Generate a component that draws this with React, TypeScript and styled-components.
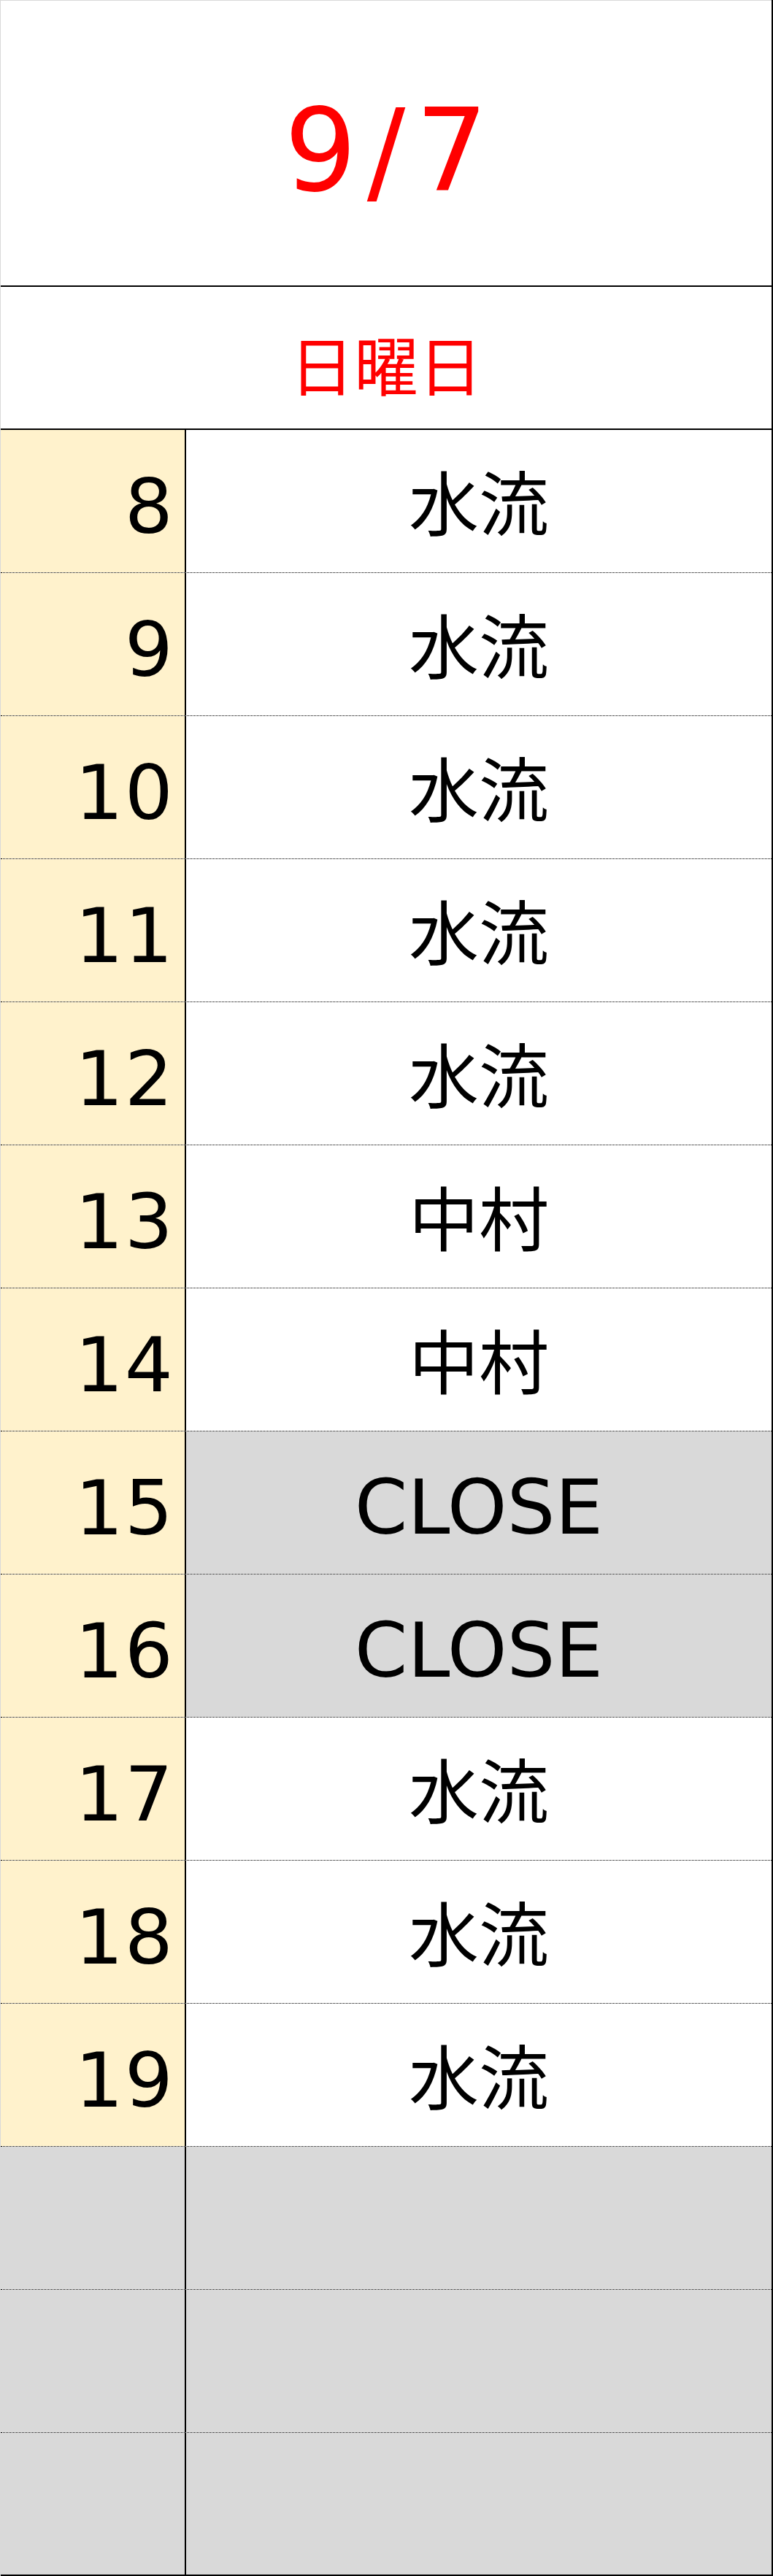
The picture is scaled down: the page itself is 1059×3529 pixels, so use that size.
import styled, { createGlobalStyle } from "styled-components";

const Global = createGlobalStyle`
    html, body {
        margin: 0;
        padding: 0;
        background: #ffffff;
    }
    body {
        font-family: "DejaVu Sans", "Noto Sans CJK JP", sans-serif;
        color: #000000;
    }
`;

const Sheet = styled.div`
    box-sizing: border-box;
    width: 1059px;
    border-left: 1px solid #d9d9d9;
    border-right: 2px solid #000000;
    display: flex;
    flex-direction: column;
`;

const Title = styled.div`
    box-sizing: border-box;
    height: 393px;
    border-top: 1px solid #d9d9d9;
    border-bottom: 2px solid #000000;
    display: flex;
    align-items: center;
    justify-content: center;
    padding: 22px 0 0 14px;
    color: #ff0000;
    font-size: 156px;
    line-height: 1;
    letter-spacing: 14px;
`;

const Weekday = styled.div`
    box-sizing: border-box;
    height: 196px;
    border-bottom: 2px solid #000000;
    display: flex;
    align-items: center;
    justify-content: center;
    padding-top: 14px;
    color: #ff0000;
    font-family: "Noto Sans CJK JP", sans-serif;
    font-size: 88px;
    line-height: 1;
`;

const Row = styled.div<{ $last?: boolean }>`
    box-sizing: border-box;
    height: 196px;
    display: grid;
    grid-template-columns: 254px 1fr;
    border-bottom: ${(p) => (p.$last ? "2px solid #000000" : "1px dotted #000000")};
`;

const Hour = styled.div<{ $empty?: boolean }>`
    box-sizing: border-box;
    border-right: 2px solid #000000;
    background: ${(p) => (p.$empty ? "#d9d9d9" : "#fff2cc")};
    display: flex;
    align-items: center;
    justify-content: flex-end;
    padding: 14px 14px 0 0;
    font-size: 104px;
    line-height: 1;
    letter-spacing: 2px;
`;

const Staff = styled.div<{ $closed?: boolean }>`
    background: ${(p) => (p.$closed ? "#d9d9d9" : "#ffffff")};
    display: flex;
    align-items: center;
    justify-content: center;
    padding-top: 12px;
    font-size: ${(p) => (p.$closed ? "104px" : "96px")};
    line-height: 1;
`;

const SHIFTS: [string, string][] = [
    ["8", "水流"],
    ["9", "水流"],
    ["10", "水流"],
    ["11", "水流"],
    ["12", "水流"],
    ["13", "中村"],
    ["14", "中村"],
    ["15", "CLOSE"],
    ["16", "CLOSE"],
    ["17", "水流"],
    ["18", "水流"],
    ["19", "水流"],
];

const EMPTY_ROWS = 3;

export default function App() {
    const total = SHIFTS.length + EMPTY_ROWS;
    return (
        <>
            <Global />
            <Sheet>
                <Title>9/7</Title>
                <Weekday>日曜日</Weekday>
                {SHIFTS.map(([hour, name], i) => (
                    <Row key={hour} $last={i === total - 1}>
                        <Hour>{hour}</Hour>
                        <Staff $closed={name === "CLOSE"}>{name}</Staff>
                    </Row>
                ))}
                {Array.from({ length: EMPTY_ROWS }, (_, i) => (
                    <Row key={`empty-${i}`} $last={SHIFTS.length + i === total - 1}>
                        <Hour $empty />
                        <Staff $closed />
                    </Row>
                ))}
            </Sheet>
        </>
    );
}
